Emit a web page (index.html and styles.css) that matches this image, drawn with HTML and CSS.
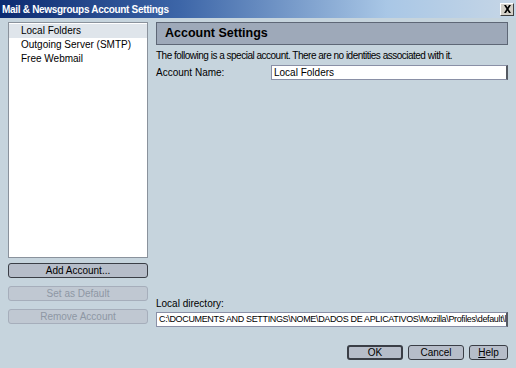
FILE: index.html
```html
<!DOCTYPE html>
<html>
<head>
<meta charset="utf-8">
<link rel="stylesheet" href="styles.css">
</head>
<body>
<div class="window">
  <div class="titlebar">
    <span class="title">Mail &amp; Newsgroups Account Settings</span>
    <span class="close"><svg width="9" height="8" viewBox="0 0 9 8"><path d="M1 0h2l1.5 2.5L6 0h2L5.5 4 8 8H6L4.5 5.5 3 8H1l2.5-4z" fill="#000"/></svg></span>
  </div>
  <div class="body">
    <div class="main">
      <div class="left">
        <ul class="list">
          <li class="sel">Local Folders</li>
          <li>Outgoing Server (SMTP)</li>
          <li>Free Webmail</li>
        </ul>
        <button class="btn primary-l">Add Account...</button>
        <button class="btn disabled">Set as Default</button>
        <button class="btn disabled">Remove Account</button>
      </div>
      <div class="right">
        <div class="header">Account Settings</div>
        <p class="info">The following is a special account. There are no identities associated with it.</p>
        <div class="row">
          <label>Account Name:</label>
          <div class="input name">Local Folders</div>
        </div>
        <div class="spacer"></div>
        <label class="dirlabel">Local directory:</label>
        <div class="input dir">C:\DOCUMENTS AND SETTINGS\NOME\DADOS DE APLICATIVOS\Mozilla\Profiles\default\l</div>
      </div>
    </div>
    <div class="footer">
      <button class="btn dlg default">OK</button>
      <button class="btn dlg">Cancel</button>
      <button class="btn dlg help"><u>H</u>elp</button>
    </div>
  </div>
</div>
</body>
</html>
```
FILE: styles.css
```css
* { box-sizing: border-box; }
html, body { margin: 0; padding: 0; }
body {
  width: 516px; height: 368px; overflow: hidden;
  font-family: "Liberation Sans", Arial, sans-serif;
  font-size: 10px;
  color: #000;
  background: #c6d4dd;
}
.window { width: 516px; height: 368px; display: flex; flex-direction: column; }
.titlebar {
  height: 18px;
  background: linear-gradient(to right, #0c2a70 0%, #3d66a8 35%, #a9c7e6 75%, #c6d6e6 100%);
  display: flex; align-items: center; justify-content: space-between;
  padding: 0 2px 0 2px;
}
.title { color: #fff; font-weight: bold; font-size: 10px; letter-spacing: -0.3px; }
.close {
  width: 14px; height: 13px; background: #d4d0c8;
  border: 1px solid; border-color: #fff #404040 #404040 #fff;
  display: flex; align-items: center; justify-content: center;
}
.body { flex: 1; display: flex; flex-direction: column; padding: 4px 8px 8px 8px; }
.main { flex: 1; display: flex; gap: 8px; min-height: 0; }
.left { width: 140px; flex: none; display: flex; flex-direction: column; }
.list {
  list-style: none; margin: 0; padding: 1px 0;
  height: 236px; background: #fff;
  border: 1px solid #8a929c;
}
.list li { height: 14px; line-height: 14px; padding-left: 12px; }
.list li.sel { background: #dfe5eb; }
.btn {
  font-family: inherit; font-size: 10px; color: #000;
  height: 15px; padding: 0; margin: 0;
  border-radius: 3px;
  background: #b6bdc9;
  border: 1px solid #3a3e46;
}
.left .btn { width: 140px; }
.primary-l { margin-top: 5px; }
.disabled { margin-top: 8px; color: #8e97a4; border-color: #a6aebb; background: #c0c8d2; }
.right { flex: 1; min-width: 0; display: flex; flex-direction: column; }
.header {
  height: 23px; background: #9ea9b9; border: 1px solid #5e6776;
  font-weight: bold; font-size: 12.5px; padding-left: 8px; line-height: 21px;
}
.info { margin: 5px 0 0 0; line-height: 11px; letter-spacing: -0.5px; }
.row { display: flex; align-items: center; margin-top: 4px; }
.row label { width: 115px; flex: none; }
.input {
  background: #fff; height: 15px; line-height: 13px; padding-left: 2px;
  border: 1px solid; border-color: #8a90a6 #555a62 #8a90a6 #8a90a6;
  border-right-width: 2px;
  white-space: nowrap; overflow: hidden; min-width: 0;
}
.name { flex: 1; }
.spacer { flex: 1; }
.dirlabel { line-height: 11px; margin-bottom: 3px; }
.dir { margin-bottom: 18px; font-size: 9px; letter-spacing: -0.35px; }
.footer { display: flex; justify-content: flex-end; gap: 5px; height: 15px; }
.dlg { width: 56px; }
.dlg.help { width: 39px; }
.dlg.default { border-width: 2px; }
```
